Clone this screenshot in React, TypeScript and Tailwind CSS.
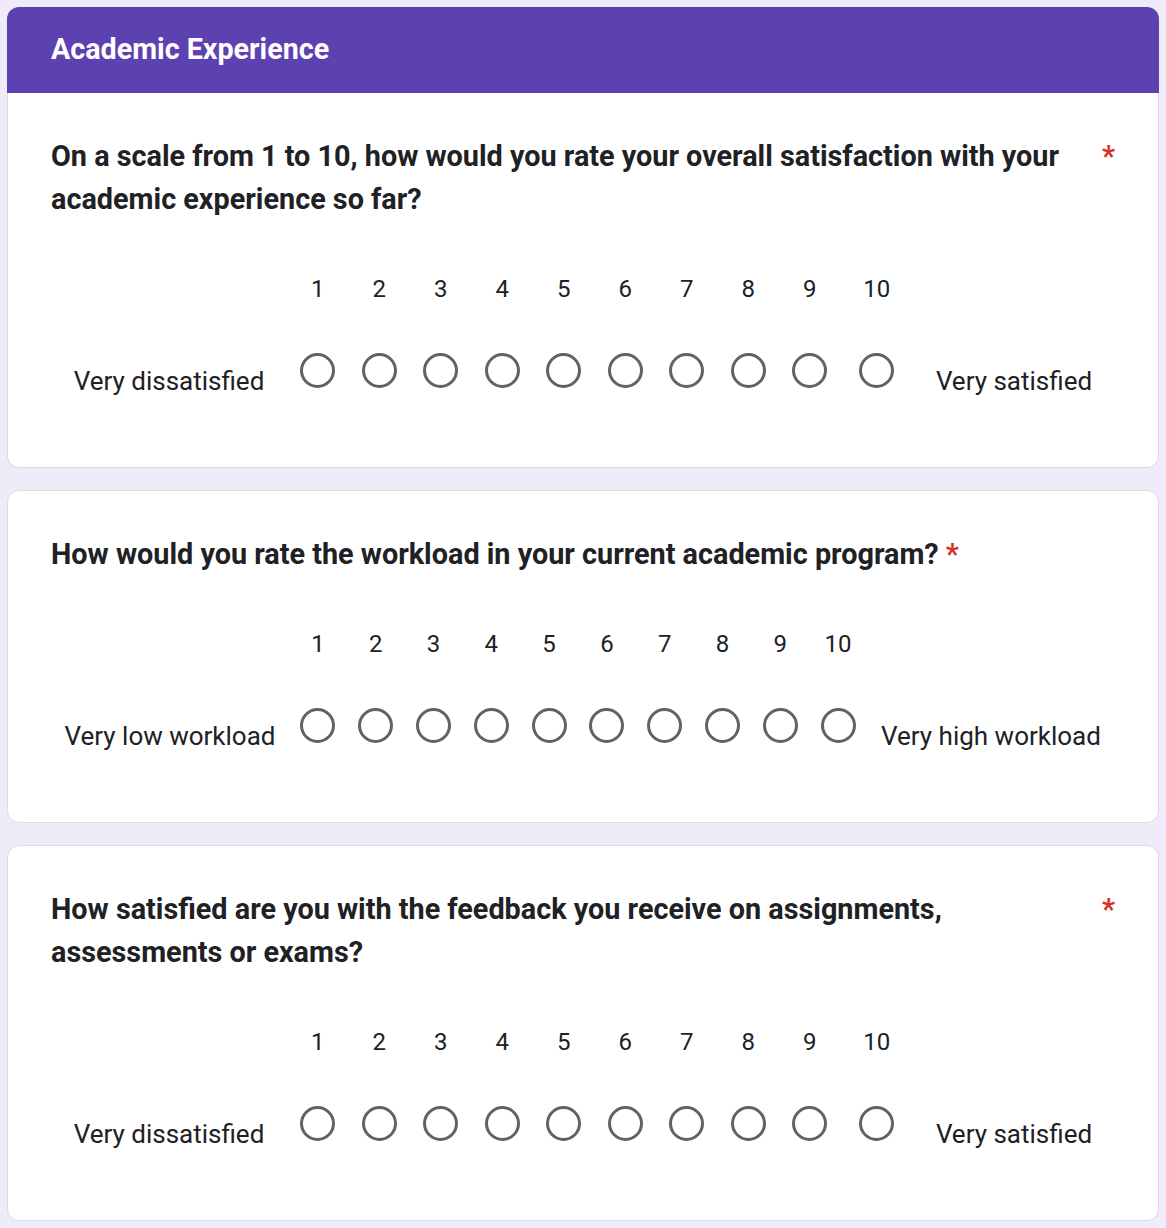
import React from 'react'

interface ScaleQuestion {
  title: string
  low: string
  high: string
  leftWidth: number
  colWidth: number
  lastColWidth: number
}

const questions: ScaleQuestion[] = [
  {
    title: 'On a scale from 1 to 10, how would you rate your overall satisfaction with your academic experience so far?',
    low: 'Very dissatisfied',
    high: 'Very satisfied',
    leftWidth: 236,
    colWidth: 61.5,
    lastColWidth: 72.5,
  },
  {
    title: 'How would you rate the workload in your current academic program?',
    low: 'Very low workload',
    high: 'Very high workload',
    leftWidth: 238,
    colWidth: 57.8,
    lastColWidth: 57.8,
  },
  {
    title: 'How satisfied are you with the feedback you receive on assignments, assessments or exams?',
    low: 'Very dissatisfied',
    high: 'Very satisfied',
    leftWidth: 236,
    colWidth: 61.5,
    lastColWidth: 72.5,
  },
]

function Radio() {
  return <div className='w-[35px] h-[35px] rounded-full border-[3px] border-[#5f6368] bg-white' />
}

function QuestionCard({ q, first }: { q: ScaleQuestion; first?: boolean }) {
  return (
    <div className={`bg-white border border-[#dadce0] ${first ? 'rounded-b-[12px] border-t-0 pt-[42px]' : 'rounded-[12px] pt-[42px]'} px-[43px] pb-[71px]`}>
      <div className='flex items-start text-[28.8px] leading-[43px] font-bold text-[#202124]'>
        <span className='pr-[7px]'>{q.title}</span>
        <span className='text-[#d93025] shrink-0'>*</span>
      </div>

      <div className='flex mt-[47px] text-[#202124]'>
        <div className='flex justify-center pt-[98px] text-[26px] leading-[30px] whitespace-nowrap' style={{ width: q.leftWidth }}>
          {q.low}
        </div>
        {Array.from({ length: 10 }, (_, i) => (
          <div
            key={i}
            className='flex flex-col items-center'
            style={{ width: i === 9 ? q.lastColWidth : q.colWidth }}
          >
            <span className='text-[24px] leading-[42px]'>{i + 1}</span>
            <div className='mt-[42.5px]'>
              <Radio />
            </div>
          </div>
        ))}
        <div className='flex-1 flex justify-center pt-[98px] text-[26px] leading-[30px] whitespace-nowrap'>
          {q.high}
        </div>
      </div>
    </div>
  )
}

export default function App() {
  return (
    <div className='min-h-[1228px] bg-[#f0ebf8] p-[7px] flex flex-col gap-[22px]' style={{ fontFamily: 'Roboto, "Noto Sans", sans-serif' }}>
      <div>
        <div className='bg-[#5e41b0] rounded-t-[12px] h-[86px] flex items-center px-[44px]'>
          <h1 className='text-white text-[28.7px] font-bold'>Academic Experience</h1>
        </div>
        <QuestionCard q={questions[0]} first />
      </div>
      <QuestionCard q={questions[1]} />
      <QuestionCard q={questions[2]} />
    </div>
  )
}
